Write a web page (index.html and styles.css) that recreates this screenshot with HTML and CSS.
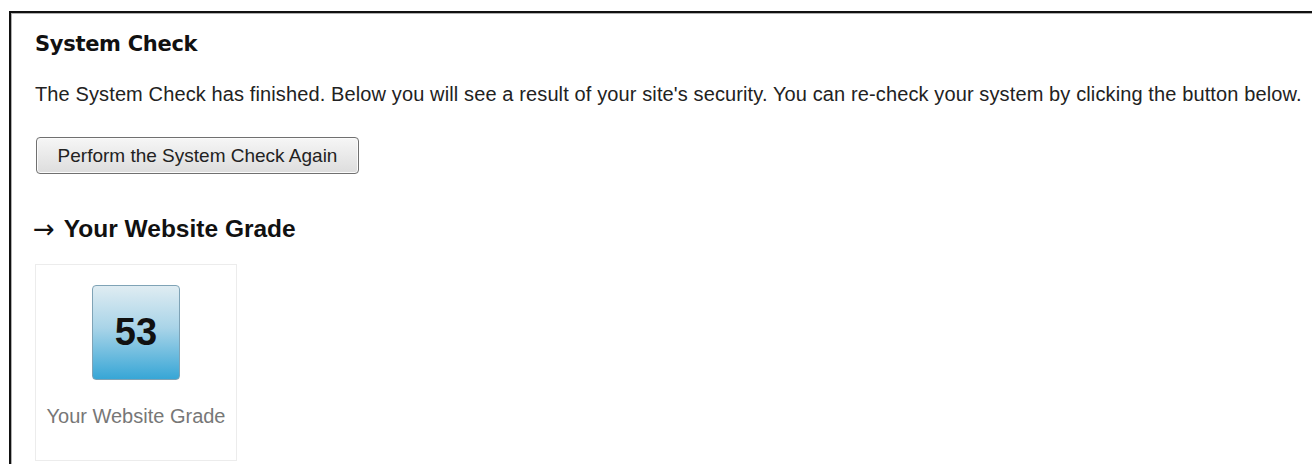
FILE: index.html
```html
<!DOCTYPE html>
<html lang="en">
<head>
<meta charset="utf-8">
<title>System Check</title>
<link rel="stylesheet" href="styles.css">
</head>
<body>
<div class="frame">
  <h1 class="title">System Check</h1>
  <p class="intro">The System Check has finished. Below you will see a result of your site's security. You can re-check your system by clicking the button below.</p>
  <button class="recheck" type="button">Perform the System Check Again</button>
  <h2 class="section"><span class="arrow">&rarr;</span>Your Website Grade</h2>
  <div class="grade-card">
    <div class="grade-tile">53</div>
    <div class="grade-label">Your Website Grade</div>
  </div>
</div>
</body>
</html>
```

FILE: styles.css
```css
html, body {
  margin: 0;
  padding: 0;
  background: #fff;
}

body {
  font-family: "Liberation Sans", Arial, sans-serif;
  color: #222;
  overflow: hidden;
  height: 464px;
}

.frame {
  margin: 11px 0 0 9px;
  border-top: 2px solid #111;
  border-left: 2px solid #111;
  box-shadow: inset 1px 1px 0 #b0b0b0;
  padding: 0 0 0 24px;
  height: 460px;
}

.title {
  margin: 0;
  padding-top: 19px;
  font-family: "DejaVu Sans", Verdana, sans-serif;
  font-weight: bold;
  font-size: 21px;
  line-height: 24px;
  color: #111;
  letter-spacing: -0.3px;
}

.intro {
  margin: 27px 0 0;
  font-size: 20px;
  line-height: 22px;
  letter-spacing: 0.12px;
  color: #222;
  white-space: nowrap;
}

.recheck {
  display: block;
  margin: 32px 0 0 1px;
  width: 323px;
  height: 37px;
  padding: 0;
  font-family: "Liberation Sans", Arial, sans-serif;
  font-size: 19px;
  color: #222;
  background: linear-gradient(#f6f6f6, #dddddd);
  border: 1px solid #707070;
  border-radius: 4px;
  box-shadow: inset 0 0 0 1px #fbfbfb;
}

.section {
  display: flex;
  align-items: center;
  margin: 41px 0 0;
  font-size: 24.5px;
  line-height: 28px;
  font-weight: bold;
  color: #111;
}

.arrow {
  font-family: "DejaVu Sans", sans-serif;
  font-weight: normal;
  font-size: 26px;
  margin: 0 9px 0 -2px;
}

.grade-card {
  margin-top: 21px;
  width: 200px;
  height: 195px;
  border: 1px solid #ececec;
  display: flex;
  flex-direction: column;
  align-items: center;
}

.grade-tile {
  margin-top: 20px;
  width: 86px;
  height: 93px;
  border: 1px solid #7fa3b6;
  border-radius: 4px;
  background: linear-gradient(#dfecf2 0%, #a9d4e8 45%, #37a6d6 100%);
  display: flex;
  align-items: center;
  justify-content: center;
  font-size: 38px;
  font-weight: bold;
  color: #111;
}

.grade-label {
  margin-top: 25px;
  font-size: 20px;
  color: #777;
}
```
